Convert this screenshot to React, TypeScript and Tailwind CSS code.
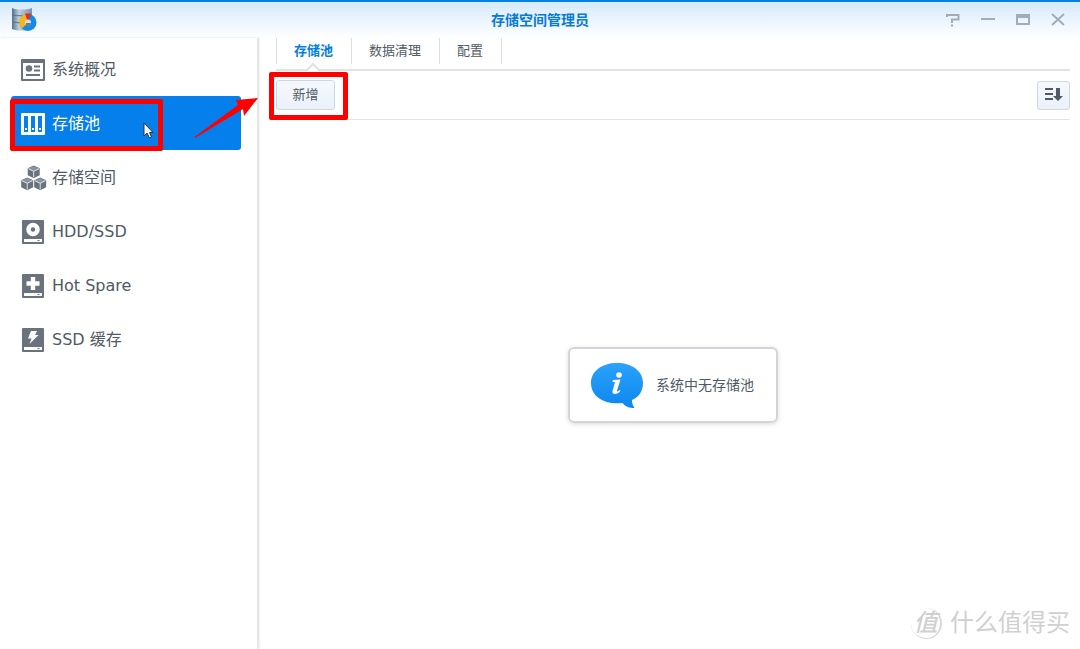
import { useState } from 'react';
import type { ReactNode } from 'react';
import clsx from 'clsx';

interface NavItem {
  id: string;
  label: string;
  icon: ReactNode;
}

function OverviewIcon() {
  return (
    <svg className="w-6 h-6" viewBox="0 0 24 24">
      <path fill="currentColor" fillRule="evenodd" d="M1 1h22a1 1 0 0 1 1 1v20a1 1 0 0 1-1 1H1a1 1 0 0 1-1-1V2a1 1 0 0 1 1-1zM2 5v16h20V5z" />
      <circle cx="8" cy="10.500" r="3.300" fill="currentColor" />
      <path fill="currentColor" d="M13 7.500h6v2h-6zM13 11.500h6v2h-6zM5 16h14v2H5z" />
    </svg>
  );
}

function PoolIcon() {
  return (
    <svg className="w-6 h-6" viewBox="0 0 24 24">
      <path
        fill="currentColor"
        fillRule="evenodd"
        d="M1 1h22a1 1 0 0 1 1 1v20a1 1 0 0 1-1 1H1a1 1 0 0 1-1-1V2a1 1 0 0 1 1-1zM3 4v16h4V4zM10 4v16h4V4zM17 4v16h4V4z"
      />
      <path fill="currentColor" d="M4 16h2v2H4zM11 16h2v2h-2zM18 16h2v2h-2z" />
    </svg>
  );
}

function Cube({ x, y }: { x: number; y: number }) {
  return (
    <g transform={`translate(${x} ${y})`}>
      <path fill="#69727d" d="M6.200 0l6 2.800v6.900l-6 3-6-3V2.800z" />
      <path fill="#8b939b" d="M6.200.5l5.300 2.500-5.300 2.500L.9 3z" />
      <path fill="none" stroke="#fff" strokeWidth=".8" d="M.9 3.200l5.300 2.600 5.300-2.600M6.200 5.800V12" />
    </g>
  );
}

function VolumeIcon() {
  return (
    <svg className="w-[26px] h-[26px] -mr-0.5" viewBox="0 0 26 26">
      <Cube x={6.5} y={0.5} />
      <Cube x={0} y={12.500} />
      <Cube x={13} y={12.500} />
    </svg>
  );
}

// Shared drive body, the symbol on top comes in as children
function DriveIcon({ children }: { children: ReactNode }) {
  return (
    <svg className="w-6 h-6" viewBox="0 0 24 24">
      <rect x="1" y="0" width="22" height="24" rx="1" fill="#69727d" />
      <path fill="#fff" d="M3 19h18v3H3z" />
      <path fill="#69727d" d="M16.500 20h2v1h-2z" />
      {children}
    </svg>
  );
}

const navItems: NavItem[] = [
  { id: 'overview', label: '系统概况', icon: <OverviewIcon /> },
  { id: 'pool', label: '存储池', icon: <PoolIcon /> },
  { id: 'volume', label: '存储空间', icon: <VolumeIcon /> },
  {
    id: 'hdd',
    label: 'HDD/SSD',
    icon: (
      <DriveIcon>
        <circle cx="12" cy="9.500" r="4.500" fill="none" stroke="#fff" strokeWidth="4.500" />
      </DriveIcon>
    ),
  },
  {
    id: 'spare',
    label: 'Hot Spare',
    icon: (
      <DriveIcon>
        <path fill="#fff" d="M9.800 3h4.400v4.300h4.300v4.400h-4.300V16H9.800v-4.300H5.500V7.300h4.300z" />
      </DriveIcon>
    ),
  },
  {
    id: 'cache',
    label: 'SSD 缓存',
    icon: (
      <DriveIcon>
        <path fill="#fff" d="M10 3h6l-2 4h3.500L8.500 16l2-5.500H7z" />
      </DriveIcon>
    ),
  },
];

const tabs = ['存储池', '数据清理', '配置'];

function AppLogo() {
  return (
    <svg className="w-[26px] h-[26px]" viewBox="0 0 26 26">
      <defs>
        <linearGradient id="disk">
          <stop offset="0" stopColor="#54728b" />
          <stop offset=".35" stopColor="#bfd0dc" />
          <stop offset="1" stopColor="#7894a9" />
        </linearGradient>
      </defs>
      <path fill="url(#disk)" d="M0 1c5 2 14 2 20 0v21c-6 2-15 2-20 0z" />
      <path fill="none" stroke="#58748a" strokeWidth="1" d="M0 8c5 1 14 1 20 0M0 15c5 1 14 1 20 0" />
      <circle cx="16" cy="15.500" r="8.500" fill="#168ae8" />
      <path fill="#f5b51d" d="M16 15.500L10 21.500A8.500 8.500 0 0 1 14 7z" />
      <path fill="#e6292e" d="M16 15.500l-3-9h6z" />
      <circle cx="16" cy="15.500" r="3" fill="#d5e1e9" />
      <path fill="#657b8d" d="M14 16h5a3 3 0 0 1-5 2z" />
    </svg>
  );
}

function WindowControls() {
  const button = 'w-5 h-5 flex items-center justify-center text-[#a1adb7]';
  return (
    <div className="flex gap-[15px]">
      <button className={button} aria-label="Help">
        <svg className="w-3.5 h-3.5" viewBox="0 0 14 14" fill="none" stroke="currentColor" strokeWidth="2">
          <path d="M1 4V2h11.500v4.500H6V10M6 11.500v2" />
        </svg>
      </button>
      <button className={button} aria-label="Minimize">
        <svg className="w-3.5 h-3.5" viewBox="0 0 14 14">
          <path fill="currentColor" d="M0 5h14v2H0z" />
        </svg>
      </button>
      <button className={button} aria-label="Maximize">
        <svg className="w-3.5 h-3.5" viewBox="0 0 14 14">
          <path fill="currentColor" fillRule="evenodd" d="M0 1h14v11H0zM2 5v5h10V5z" />
        </svg>
      </button>
      <button className={button} aria-label="Close">
        <svg className="w-3.5 h-3.5" viewBox="0 0 14 14" stroke="currentColor" strokeWidth="2">
          <path d="M1 1l12 11M13 1L1 12" />
        </svg>
      </button>
    </div>
  );
}

function Sidebar({ active, onSelect }: { active: string; onSelect: (id: string) => void }) {
  return (
    <nav className="w-[258px] shrink-0 pt-1 pl-[11px] pr-4 border-r border-[#e4e6e8] shadow-[1px_0_2px_rgba(0,0,0,0.14)]">
      {navItems.map((item) => (
        <button
          key={item.id}
          onClick={() => onSelect(item.id)}
          className={clsx(
            'relative w-full h-[54px] pl-2.5 pt-0.5 flex items-center gap-[7px] rounded-[3px] text-base text-left',
            active === item.id ? 'bg-[#057feb] text-white' : 'text-[#505a64]'
          )}
        >
          <span className={active === item.id ? 'text-white' : 'text-[#69727d]'}>{item.icon}</span>
          {item.label}
          {item.id === 'pool' && (
            <>
              <span className="absolute -left-px top-[3px] w-[153px] h-[52px] border-5 border-[#fe0000] rounded-[2px]" />
              {/* Mouse pointer */}
              <svg className="absolute left-[132px] top-[26px] w-3 h-[18px]" viewBox="0 0 12 18">
                <path fill="#fff" stroke="#333" d="M1 1v13l3-3 2.500 5 2-1L6.500 10.500H10z" />
              </svg>
              {/* Arrow towards the create button */}
              <svg className="absolute left-[183px] top-0 w-[66px] h-[44px] z-10" viewBox="0 0 66 44">
                <path fill="#fe0000" d="M64 2L50 20l-1-7L1 42l-.5-1L44 9l-2-5z" />
              </svg>
            </>
          )}
        </button>
      ))}
    </nav>
  );
}

function TabBar({ active, onSelect }: { active: string; onSelect: (tab: string) => void }) {
  return (
    <div role="tablist" className="flex h-[33px] border-b-2 border-[#e1e3e4]">
      {tabs.map((tab) => (
        <button
          key={tab}
          role="tab"
          aria-selected={active === tab}
          onClick={() => onSelect(tab)}
          className={clsx(
            'relative h-[26px] pl-[17px] pr-[18px] border-r border-[#d8e0e6] first:border-l text-[13px]',
            active === tab ? 'font-bold text-[#057fdf]' : 'text-[#505a64]'
          )}
        >
          {tab}
          {active === tab && (
            <svg className="absolute left-1/2 top-[25px] -ml-2 w-3.5 h-2" viewBox="0 0 14 8">
              <path fill="#fff" stroke="#dfe2e4" strokeWidth="2" d="M0 8l7-7 7 7" />
            </svg>
          )}
        </button>
      ))}
    </div>
  );
}

function Toolbar() {
  return (
    <div className="flex items-center justify-between h-[49px] border-b border-[#dfe4e8]">
      <div className="relative">
        <button className="w-[59px] h-[30px] border border-[#cdd8e2] rounded-[3px] bg-linear-to-b from-[#f5f9fe] to-[#eaf1f9] text-[13px] text-[#505a64]">
          新增
        </button>
        <span className="absolute -left-[7px] -top-2 w-[79px] h-12 border-5 border-[#fe0000] rounded-[2px] pointer-events-none" />
      </div>
      <button
        aria-label="排序"
        className="w-[33px] h-[29px] flex items-center justify-center border border-[#cdd8e2] rounded-[3px] bg-linear-to-b from-[#f5f9fe] to-[#eaf1f9]"
      >
        <svg className="w-[18px] h-4" viewBox="0 0 18 16" fill="#505a64">
          <path d="M0 1h8v2H0zM0 6h8v2H0zM0 11h8v2H0zM11 1h4v8h3l-5 5-5-5h3z" />
        </svg>
      </button>
    </div>
  );
}

function EmptyMessage() {
  return (
    <div className="flex items-center gap-3 h-[76px] pl-5 pr-[22px] border-2 border-[#d2d6da] rounded-md shadow-[0_1px_4px_rgba(0,0,0,0.15)]">
      <svg className="w-[54px] h-[48px]" viewBox="0 0 54 48">
        <defs>
          <linearGradient id="bubble" x2="0" y2="1">
            <stop offset="0" stopColor="#2ba2fb" />
            <stop offset="1" stopColor="#0c87ed" />
          </linearGradient>
        </defs>
        <path fill="url(#bubble)" d="M27 2c15 0 26 8 26 20 0 8-4 14-11 17 0 3 .5 5 2.500 8-5 0-9-1-12-5C15 44 1 36 1 22 1 10 12 2 27 2z" />
        <circle cx="29" cy="14" r="2.800" fill="#fff" />
        <path fill="#fff" d="M23 19l7.500-.5-3.500 11c-.3 1.500.5 1.500 2.500-.5l1 .8c-3 4-9 4.500-8 .2l2.500-9H22.500z" />
      </svg>
      <p className="text-sm text-[#505a64] whitespace-nowrap">系统中无存储池</p>
    </div>
  );
}

function Watermark() {
  return (
    <div className="absolute right-2.5 bottom-2.5 flex items-center gap-2 text-[#d0d0d0]">
      <span className="w-[31px] h-[31px] flex items-center justify-center rounded-full border-r-2 border-b border-[#d8d8d8] text-2xl font-medium italic">
        值
      </span>
      <span className="text-2xl">什么值得买</span>
    </div>
  );
}

export default function App() {
  const [section, setSection] = useState('pool');
  const [tab, setTab] = useState('存储池');

  return (
    <div className="relative min-h-screen flex flex-col overflow-hidden bg-white font-['DejaVu_Sans','Noto_Sans_CJK_SC',sans-serif]">
      <header className="flex items-center h-[38px] px-3 border-t-2 border-[#0580e4] bg-linear-to-b from-[#d5eafb] to-white">
        <div className="flex-1">
          <AppLogo />
        </div>
        <h1 className="text-sm font-bold text-[#087bd5]">存储空间管理员</h1>
        <div className="flex-1 flex justify-end">
          <WindowControls />
        </div>
      </header>

      <div className="flex flex-1">
        <Sidebar active={section} onSelect={setSection} />
        <main className="flex-1 flex flex-col pl-[18px] pr-2.5">
          <TabBar active={tab} onSelect={setTab} />
          <Toolbar />
          <section className="flex-1 flex items-center justify-center">
            <EmptyMessage />
          </section>
        </main>
      </div>

      <Watermark />
    </div>
  );
}
